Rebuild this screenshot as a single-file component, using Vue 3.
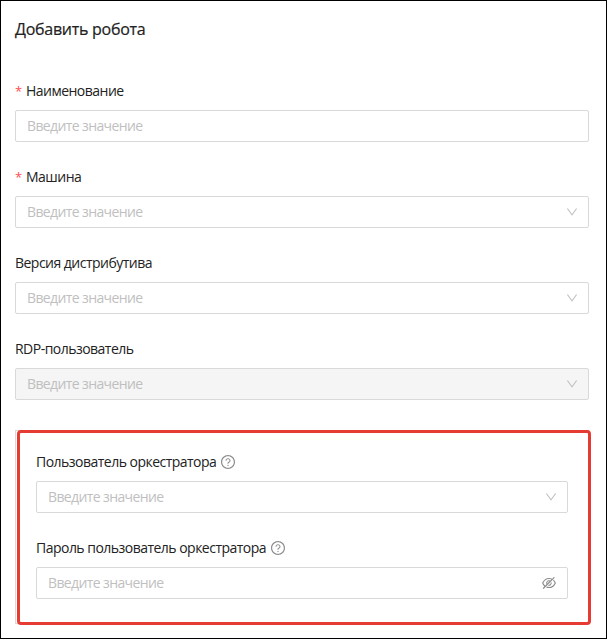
<script setup>
const placeholder = 'Введите значение'

const fields = [
  { label: 'Наименование', required: true, kind: 'input' },
  { label: 'Машина', required: true, kind: 'select' },
  { label: 'Версия дистрибутива', kind: 'select' },
  { label: 'RDP-пользователь', kind: 'select', disabled: true },
]

const groupFields = [
  { label: 'Пользователь оркестратора', kind: 'select' },
  { label: 'Пароль пользователь оркестратора', kind: 'password' },
]
</script>

<template>
  <main class="page">
    <h1 class="title">Добавить робота</h1>
    <div v-for="f in fields" :key="f.label" class="field">
      <div class="label">
        <span v-if="f.required" class="star">*</span>
        <span>{{ f.label }}</span>
      </div>
      <div class="control" :class="{ disabled: f.disabled }">
        <span class="placeholder">{{ placeholder }}</span>
        <svg v-if="f.kind === 'select'" class="down" viewBox="64 64 896 896"><path d="M884 256h-75c-5.1 0-9.9 2.5-12.9 6.6L512 654.2 227.9 262.6c-3-4.1-7.8-6.6-12.9-6.6h-75c-6.5 0-10.3 7.4-6.5 12.7l352.6 486.1c12.8 17.6 39 17.6 51.7 0l352.6-486.1c3.9-5.3.1-12.7-6.4-12.7z" /></svg>
      </div>
    </div>
    <section class="group">
      <div v-for="f in groupFields" :key="f.label" class="field">
        <div class="label">
          <span>{{ f.label }}</span>
          <svg class="help" viewBox="64 64 896 896"><path d="M512 64C264.6 64 64 264.6 64 512s200.6 448 448 448 448-200.6 448-448S759.4 64 512 64zm0 820c-205.4 0-372-166.6-372-372s166.6-372 372-372 372 166.6 372 372-166.6 372-372 372z" /><path d="M623.6 316.7C593.6 290.4 554 276 512 276s-81.6 14.5-111.6 40.7C369.2 344 352 380.7 352 420v7.6c0 4.4 3.6 8 8 8h48c4.4 0 8-3.6 8-8V420c0-44.1 43.1-80 96-80s96 35.9 96 80c0 31.1-22 59.6-56.1 72.7-21.2 8.1-39.2 22.3-52.1 40.9-13.1 19-19.9 41.8-19.9 64.9V620c0 4.4 3.6 8 8 8h48c4.4 0 8-3.6 8-8v-22.7a48.3 48.3 0 0130.9-44.8c59-22.7 97.1-74.7 97.1-132.5.1-39.3-17.1-76-48.3-103.3zM472 732a40 40 0 1080 0 40 40 0 10-80 0z" /></svg>
        </div>
        <div class="control">
          <span class="placeholder">{{ placeholder }}</span>
          <svg v-if="f.kind === 'select'" class="down" viewBox="64 64 896 896"><path d="M884 256h-75c-5.1 0-9.9 2.5-12.9 6.6L512 654.2 227.9 262.6c-3-4.1-7.8-6.6-12.9-6.6h-75c-6.5 0-10.3 7.4-6.5 12.7l352.6 486.1c12.8 17.6 39 17.6 51.7 0l352.6-486.1c3.9-5.3.1-12.7-6.4-12.7z" /></svg>
          <svg v-else class="eye" viewBox="64 64 896 896"><path d="M942.2 486.2Q889.47 375.11 816.7 305l-50.88 50.88C807.31 395.53 843.45 447.4 874.7 512 791.5 684.2 673.4 766 512 766q-72.67 0-133.87-22.38L323 798.75Q408 838 512 838q288.3 0 430.2-300.3a60.29 60.29 0 000-51.5zm-63.57-320.64L836 122.88a8 8 0 00-11.32 0L715.31 232.2Q624.86 186 512 186q-288.3 0-430.2 300.3a60.3 60.3 0 000 51.5q56.69 119.4 136.5 191.41L112.48 835a8 8 0 000 11.31L155.17 889a8 8 0 0011.31 0l712.15-712.12a8 8 0 000-11.32zM149.3 512C232.6 339.8 350.7 258 512 258c54.54 0 104.13 9.36 149.12 28.39l-70.3 70.3a176 176 0 00-238.13 238.13l-83.42 83.42C223.1 637.49 183.3 582.28 149.3 512zm246.7 0a112.11 112.11 0 01146.2-106.69L401.31 546.2A112 112 0 01396 512z" /><path d="M508 624c-3.46 0-6.87-.16-10.25-.47l-52.82 52.82a176.09 176.09 0 00227.42-227.42l-52.82 52.82c.31 3.38.47 6.79.47 10.25a111.94 111.94 0 01-112 112z" /></svg>
        </div>
      </div>
      <div class="highlight"></div>
    </section>
  </main>
</template>

<style>
body {
  background: #fff;
}
</style>

<style scoped>
.page {
  box-sizing: border-box;
  width: 607px;
  height: 639px;
  border: 1px solid #000;
  padding: 17px 17px 0 14px;
  font-family: 'Open Sans', 'Noto Sans', sans-serif;
  font-size: 14px;
  letter-spacing: -0.52px;
  color: #222;
  background: #fff;
}
.title {
  margin: 0 0 38px;
  height: 24px;
  line-height: 23px;
  font-size: 16px;
  font-weight: 500;
  letter-spacing: -0.27px;
  -webkit-text-stroke: 0.2px #222;
  white-space: nowrap;
}
.field {
  margin-bottom: 24px;
}
.label {
  display: flex;
  align-items: center;
  height: 22px;
  margin-bottom: 8px;
  line-height: 22px;
  white-space: nowrap;
}
.star {
  width: 11px;
  font-size: 13px;
  color: #ff4d4f;
}
.control {
  box-sizing: border-box;
  display: flex;
  align-items: center;
  justify-content: space-between;
  height: 32px;
  border: 1px solid #d9d9d9;
  border-radius: 2px;
  padding: 0 11px;
  background: #fff;
}
.disabled {
  background: #f5f5f5;
}
.placeholder {
  line-height: 22px;
  letter-spacing: -0.62px;
  color: #bfbfbf;
  white-space: nowrap;
}
.down {
  width: 12px;
  height: 12px;
  margin-right: -1px;
  fill: #bfbfbf;
}
.eye {
  width: 14px;
  height: 14px;
  fill: #8c8c8c;
}
.help {
  width: 14px;
  height: 14px;
  margin-left: 5px;
  fill: #8c8c8c;
}
.group {
  position: relative;
  box-sizing: border-box;
  height: 194px;
  margin-top: 30px;
  border: 1px solid #d9d9d9;
  padding: 20px;
}
.highlight {
  position: absolute;
  box-sizing: border-box;
  left: 1px;
  top: -1px;
  width: 574px;
  height: 195px;
  border: 3px solid #e63b32;
  border-radius: 4px;
  pointer-events: none;
}
</style>
